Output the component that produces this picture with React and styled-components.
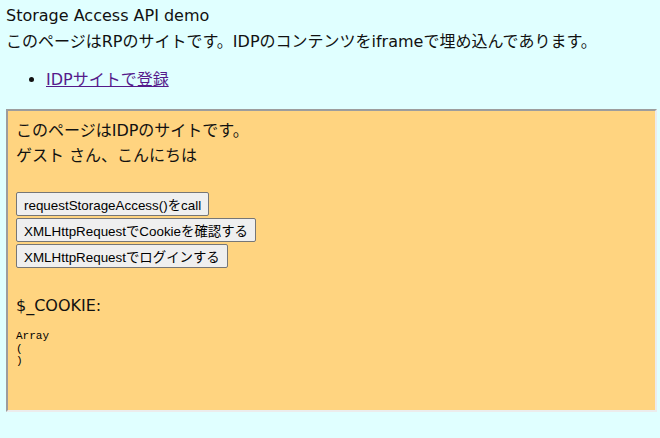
import React from "react";
import styled, { createGlobalStyle } from "styled-components";

const GlobalStyle = createGlobalStyle`
  html, body {
    margin: 0;
    background: #e0ffff;
  }
  body {
    font-family: "DejaVu Sans", "Noto Sans CJK JP", sans-serif;
    font-size: 16px;
    color: #111;
  }
`;

const Page = styled.div`
  padding: 3px 3px 0 6px;
`;

const Line = styled.div`
  line-height: 26px;
`;

const LinkList = styled.ul`
  margin: 12px 0 16px;
  padding-left: 40px;
  line-height: 26px;
`;

const Link = styled.a`
  color: #551a8b;
  text-decoration: underline;
`;

const Frame = styled.div`
  box-sizing: border-box;
  width: 651px;
  height: 303px;
  background: #ffd480;
  border-style: solid;
  border-width: 2px;
  border-color: #9d9d9d #ececec #ececec #9d9d9d;
  padding: 7px 8px;
`;

const FrameText = styled.div`
  line-height: 25px;
`;

const Buttons = styled.div`
  display: flex;
  flex-direction: column;
  align-items: flex-start;
  gap: 2px;
  margin-top: 24px;
`;

const Button = styled.button`
  height: 24px;
  padding: 0 7px;
  font-family: "Liberation Sans", "Noto Sans CJK JP", sans-serif;
  font-size: 13.4px;
  color: #000;
  background: #efefef;
  border: 1px solid #767676;
  border-radius: 2px;
`;

const CookieLabel = styled.div`
  margin-top: 25px;
  line-height: 25px;
`;

const Dump = styled.pre`
  margin: 12px 0 0;
  font-family: "Liberation Mono", monospace;
  font-size: 11px;
  line-height: 12.5px;
  color: #000;
`;

const App = () => {
  return (
    <>
      <GlobalStyle />
      <Page>
        <Line>Storage Access API demo</Line>
        <Line>このページはRPのサイトです。IDPのコンテンツをiframeで埋め込んであります。</Line>
        <LinkList>
          <li>
            <Link href="#">IDPサイトで登録</Link>
          </li>
        </LinkList>
        <Frame>
          <FrameText>このページはIDPのサイトです。</FrameText>
          <FrameText>ゲスト さん、こんにちは</FrameText>
          <Buttons>
            <Button>requestStorageAccess()をcall</Button>
            <Button>XMLHttpRequestでCookieを確認する</Button>
            <Button>XMLHttpRequestでログインする</Button>
          </Buttons>
          <CookieLabel>$_COOKIE:</CookieLabel>
          <Dump>{"Array\n(\n)"}</Dump>
        </Frame>
      </Page>
    </>
  );
};

export default App;
